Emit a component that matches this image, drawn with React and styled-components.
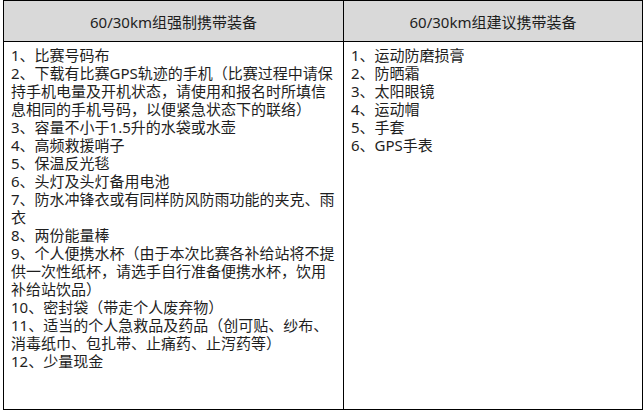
import React from "react";
import styled, { createGlobalStyle } from "styled-components";

const required = [
  ["1、比赛号码布"],
  [
    "2、下载有比赛GPS轨迹的手机（比赛过程中请保",
    "持手机电量及开机状态，请使用和报名时所填信",
    "息相同的手机号码，以便紧急状态下的联络）",
  ],
  ["3、容量不小于1.5升的水袋或水壶"],
  ["4、高频救援哨子"],
  ["5、保温反光毯"],
  ["6、头灯及头灯备用电池"],
  ["7、防水冲锋衣或有同样防风防雨功能的夹克、雨", "衣"],
  ["8、两份能量棒"],
  [
    "9、个人便携水杯（由于本次比赛各补给站将不提",
    "供一次性纸杯，请选手自行准备便携水杯，饮用",
    "补给站饮品）",
  ],
  ["10、密封袋（带走个人废弃物）"],
  ["11、适当的个人急救品及药品（创可贴、纱布、", "消毒纸巾、包扎带、止痛药、止泻药等）"],
  ["12、少量现金"],
];

const suggested = [
  "1、运动防磨损膏",
  "2、防晒霜",
  "3、太阳眼镜",
  "4、运动帽",
  "5、手套",
  "6、GPS手表",
];

const GlobalStyle = createGlobalStyle`
  html, body {
    margin: 0;
    padding: 0;
    background: #fff;
  }
  body {
    font-family: "Noto Sans", "Noto Sans CJK SC", sans-serif;
    color: #1e1e1e;
  }
`;

const Page = styled.div`
  width: 644px;
  height: 413px;
  padding: 0 0 0 3px;
  box-sizing: border-box;
`;

const Table = styled.table`
  width: 637px;
  border-collapse: collapse;
  table-layout: fixed;
`;

const HeadCell = styled.th`
  width: ${(p) => p.$w}px;
  height: 40px;
  padding: 0;
  background: #d9d9d9;
  border: 1px solid #000;
  font-weight: 400;
  font-size: 15px;
  text-align: center;
  vertical-align: middle;
`;

const BodyCell = styled.td`
  height: 368px;
  padding: 4px 0 0 7px;
  border: 1px solid #000;
  vertical-align: top;
  box-sizing: border-box;
`;

const Item = styled.div`
  font-size: 15px;
  line-height: 18px;
  white-space: nowrap;
`;

export default function App() {
  return (
    <Page>
      <GlobalStyle />
      <Table>
        <thead>
          <tr>
            <HeadCell $w={339}>60/30km组强制携带装备</HeadCell>
            <HeadCell $w={298}>60/30km组建议携带装备</HeadCell>
          </tr>
        </thead>
        <tbody>
          <tr>
            <BodyCell>
              {required.map((lines, i) => (
                <Item key={i}>
                  {lines.map((l, j) => (
                    <React.Fragment key={j}>
                      {j > 0 && <br />}
                      {l}
                    </React.Fragment>
                  ))}
                </Item>
              ))}
            </BodyCell>
            <BodyCell>
              {suggested.map((s) => (
                <Item key={s}>{s}</Item>
              ))}
            </BodyCell>
          </tr>
        </tbody>
      </Table>
    </Page>
  );
}
